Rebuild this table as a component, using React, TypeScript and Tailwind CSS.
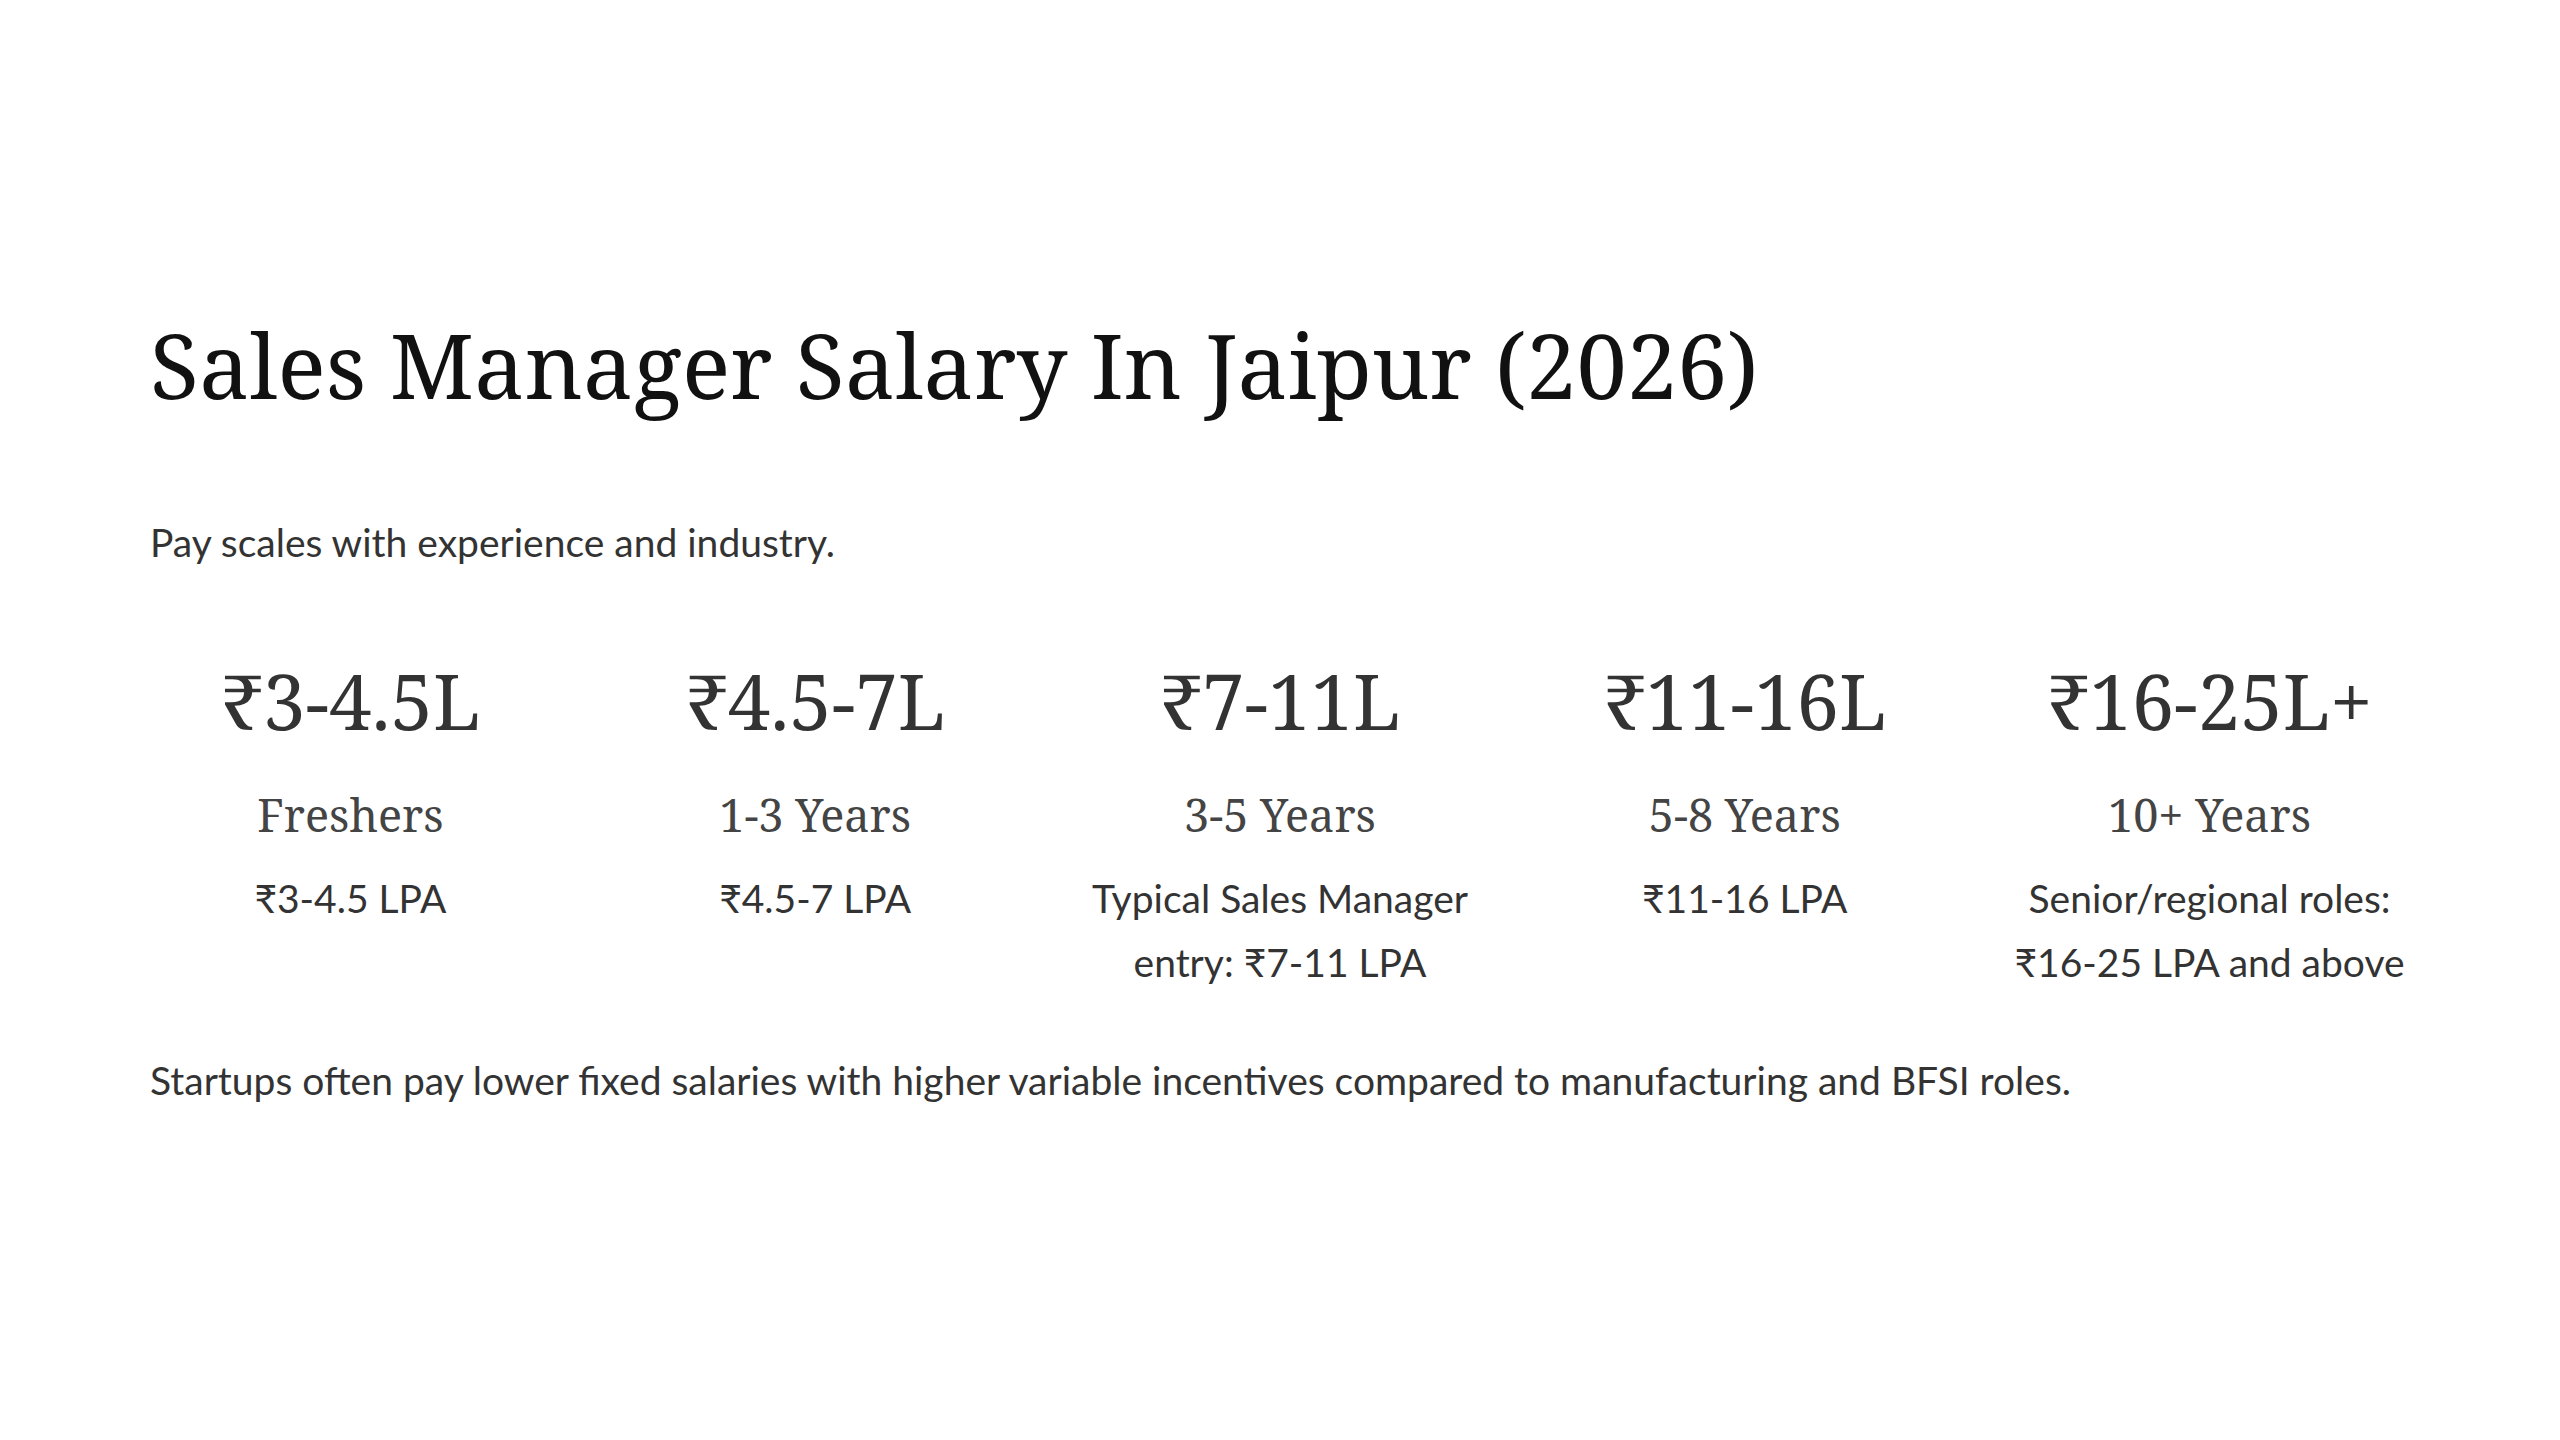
const tiers = [
  { amount: "₹3-4.5L", label: "Freshers", note: "₹3-4.5 LPA" },
  { amount: "₹4.5-7L", label: "1-3 Years", note: "₹4.5-7 LPA" },
  { amount: "₹7-11L", label: "3-5 Years", note: "Typical Sales Manager entry: ₹7-11 LPA" },
  { amount: "₹11-16L", label: "5-8 Years", note: "₹11-16 LPA" },
  { amount: "₹16-25L+", label: "10+ Years", note: "Senior/regional roles: ₹16-25 LPA and above" },
];

export default function App() {
  return (
    <div className="min-h-screen bg-white">
      <section className="px-[150px] pt-[310px] pb-[200px]">
        <h1 className="font-['Noto_Serif',serif] text-[90px] leading-[108px] font-normal text-[#111111]">
          Sales Manager Salary In Jaipur (2026)
        </h1>

        <p className="mt-[93px] font-['Lato',sans-serif] text-[39px] leading-[62px] text-[#333333]">
          Pay scales with experience and industry.
        </p>

        <div className="mt-[82px] grid grid-cols-5 gap-16">
          {tiers.map((t) => (
            <div key={t.amount} className="flex flex-col items-center text-center">
              <div className="font-['Noto_Serif',serif] text-[76px] leading-[91px] text-[#333333]">
                {t.amount}
              </div>
              <div className="mt-[37px] font-['Noto_Serif',serif] text-[45px] leading-[63px] text-[#444444]">
                {t.label}
              </div>
              <p className="mt-[20px] font-['Lato',sans-serif] text-[39px] leading-[64px] text-[#333333]">
                {t.note}
              </p>
            </div>
          ))}
        </div>

        <p className="mt-[55px] font-['Lato',sans-serif] text-[39px] leading-[62px] text-[#333333]">
          Startups often pay lower fixed salaries with higher variable incentives compared to
          manufacturing and BFSI roles.
        </p>
      </section>
    </div>
  );
}
